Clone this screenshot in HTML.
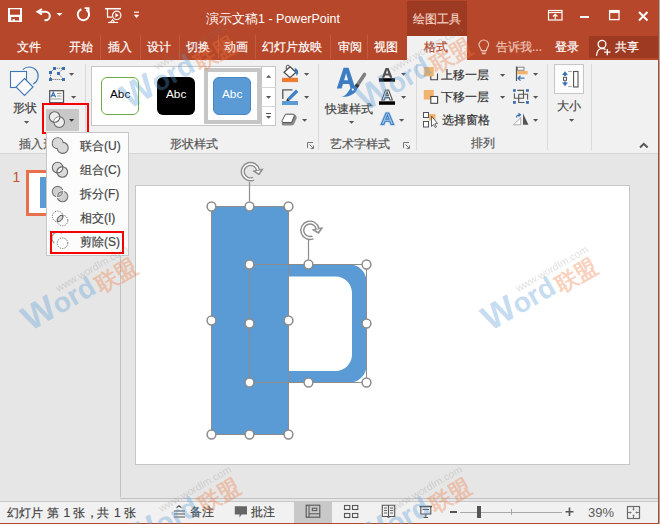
<!DOCTYPE html>
<html><head><meta charset="utf-8">
<style>
*{margin:0;padding:0;box-sizing:border-box}
html,body{width:660px;height:524px;overflow:hidden}
body{position:relative;background:#E6E6E6;font-family:"Liberation Sans",sans-serif;font-size:12px;color:#444}
.a{position:absolute}
.t{position:absolute;white-space:nowrap;line-height:12px;font-size:12px;-webkit-text-stroke:0.2px currentColor}
.ns{-webkit-text-stroke:0!important}
svg{position:absolute;overflow:visible}
.wm{position:absolute;width:0;height:0;transform-origin:0 0;transform:rotate(-30deg);pointer-events:none}
.wm span{position:absolute;white-space:nowrap;font-family:"Liberation Sans",sans-serif;font-weight:bold;line-height:1}
.w1{left:43px;top:-29px;font-size:10.5px;font-weight:normal!important;color:rgba(120,120,120,0.25)}
.wm .wW{position:static;font-size:35px}
.w2{left:-1px;top:-29.6px;font-size:28px;color:rgba(91,155,213,0.36)}
.w3{left:80px;top:-16px;font-size:22px;color:rgba(240,120,60,0.36)}
</style></head><body>

<!-- title bar + tabs -->
<div class="a" style="left:0;top:0;width:660px;height:60px;background:#B7472A"></div>
<div class="a" style="left:407px;top:1px;width:60px;height:35px;background:#9E3A21"></div>
<div class="a" style="left:407px;top:36px;width:60px;height:24px;background:#F1F1F1"></div>
<div class="a" style="left:589px;top:36px;width:69px;height:22px;background:#9E3A21"></div>

<div class="t ns" style="left:206px;top:13px;color:#fff;font-size:12.5px">演示文稿1 - PowerPoint</div>
<div class="t" style="left:413px;top:13px;color:#F3D0C4">绘图工具</div>


<!-- title icons -->
<svg style="left:8px;top:8px" width="14" height="14"><path fill="#fff" fill-rule="evenodd" d="M0 0H14V14H0Z M2 1.2V6.7H12V1.2Z M3.2 9V12.6H4.7V10.9H6.8V12.6H11V9Z"/></svg>
<svg style="left:36px;top:8px" width="16" height="14"><path d="M6 1 L1.5 3.7 L6 6.5" fill="none" stroke="#fff" stroke-width="2" stroke-linejoin="miter"/><path d="M2 3.7 H9.5 A4.3 4.3 0 0 1 9.5 12.3 H8.5" fill="none" stroke="#fff" stroke-width="2"/></svg>
<svg style="left:56px;top:13px" width="7" height="4"><path d="M0.5 0H6.5L3.5 3Z" fill="#fff"/></svg>
<svg style="left:76px;top:7px" width="16" height="16"><path d="M10.3 2.6 A5.7 5.7 0 1 1 5.4 2.2" fill="none" stroke="#fff" stroke-width="2"/><path d="M8.6 1.2 H12.6 V5.2" fill="none" stroke="#fff" stroke-width="1.8"/></svg>
<svg style="left:104px;top:7px" width="20" height="17"><path d="M1 1.7H17" stroke="#fff" stroke-width="1.5"/><path d="M3.5 2V10.2H8.3" fill="none" stroke="#fff" stroke-width="1.2"/><circle cx="12.7" cy="8.3" r="4.2" fill="none" stroke="#fff" stroke-width="1.2"/><path d="M11.4 6.1V10.5L14.8 8.3Z" fill="#fff"/><path d="M4 15.5H14" stroke="#fff" stroke-width="1.1"/><path d="M6.5 15.3 L8.6 12.8 L10.7 15.3" fill="none" stroke="#fff" stroke-width="1.1"/></svg>
<svg style="left:133px;top:11px" width="7" height="8"><path d="M1 1.2H6" stroke="#fff" stroke-width="1.2"/><path d="M0.8 3.8H6.3L3.55 7Z" fill="#fff"/></svg>

<!-- window controls -->
<svg style="left:548px;top:10px" width="15" height="11"><rect x="0.5" y="0.5" width="13.5" height="9.5" fill="none" stroke="#fff" stroke-width="1.2"/><path d="M0.5 2.5H14" stroke="#fff" stroke-width="1.2"/><path d="M7.2 9.5V4.5 M5 6.5L7.2 4.3L9.4 6.5" fill="none" stroke="#fff" stroke-width="1.2"/></svg>
<div class="a" style="left:580px;top:16px;width:9px;height:2px;background:#fff"></div>
<svg style="left:609px;top:10px" width="11" height="11"><rect x="0.6" y="0.6" width="9.4" height="9" fill="none" stroke="#fff" stroke-width="1.3"/><path d="M0.5 2H10.5" stroke="#fff" stroke-width="2.2"/></svg>
<svg style="left:638px;top:10.5px" width="11" height="11"><path d="M1 1L9.5 9.5M9.5 1L1 9.5" stroke="#fff" stroke-width="2"/></svg>

<!-- tab separators -->
<div class="a" style="left:100px;top:35px;width:1px;height:24px;background:#C15B40"></div>
<div class="a" style="left:140px;top:35px;width:1px;height:24px;background:#C15B40"></div>
<div class="a" style="left:179px;top:35px;width:1px;height:24px;background:#C15B40"></div>
<div class="a" style="left:218px;top:35px;width:1px;height:24px;background:#C15B40"></div>
<div class="a" style="left:255px;top:35px;width:1px;height:24px;background:#C15B40"></div>
<div class="a" style="left:330px;top:35px;width:1px;height:24px;background:#C15B40"></div>
<div class="a" style="left:367px;top:35px;width:1px;height:24px;background:#C15B40"></div>

<!-- bulb -->
<svg style="left:478px;top:40px" width="12" height="15"><path d="M3.2 10.5 C3.2 8 1 7 1 4.8 A4.8 4.8 0 0 1 10.6 4.8 C10.6 7 8.4 8 8.4 10.5 Z" fill="none" stroke="#EDC3B5" stroke-width="1.2"/><path d="M3.5 12H8.2 M4 13.6H7.7" stroke="#EDC3B5" stroke-width="1.2"/></svg>
<!-- person -->
<svg style="left:595px;top:39px" width="17" height="18"><circle cx="7" cy="5.3" r="3.9" fill="none" stroke="#fff" stroke-width="1.3"/><path d="M1.5 16.8 C1.8 12.5 4 9.5 7 9.3 C8.5 9.3 9.5 9.8 10.5 10.6" fill="none" stroke="#fff" stroke-width="1.3"/><path d="M12.3 10V16.3 M9.2 13.2H15.5" stroke="#fff" stroke-width="1.3"/></svg>

<!-- tabs -->
<div class="t" style="left:17px;top:41px;color:#fff">文件</div>
<div class="t" style="left:69px;top:41px;color:#fff">开始</div>
<div class="t" style="left:108px;top:41px;color:#fff">插入</div>
<div class="t" style="left:147px;top:41px;color:#fff">设计</div>
<div class="t" style="left:186px;top:41px;color:#fff">切换</div>
<div class="t" style="left:224px;top:41px;color:#fff">动画</div>
<div class="t" style="left:262px;top:41px;color:#fff">幻灯片放映</div>
<div class="t" style="left:338px;top:41px;color:#fff">审阅</div>
<div class="t" style="left:374px;top:41px;color:#fff">视图</div>
<div class="t" style="left:424px;top:41px;color:#B7472A">格式</div>
<div class="t" style="left:496px;top:41px;color:#EDC3B5">告诉我...</div>
<div class="t" style="left:555px;top:41px;color:#fff">登录</div>
<div class="t" style="left:615px;top:41px;color:#fff">共享</div>

<!-- ribbon -->
<div class="a" style="left:0;top:60px;width:658px;height:94px;background:#F1F1F1;border-bottom:1px solid #D6D6D6"></div>


<!-- ===== ribbon content ===== -->
<!-- group separators -->
<div class="a" style="left:85px;top:64px;width:1px;height:86px;background:#DADADA"></div>
<div class="a" style="left:318px;top:64px;width:1px;height:86px;background:#DADADA"></div>
<div class="a" style="left:416px;top:64px;width:1px;height:86px;background:#DADADA"></div>
<div class="a" style="left:547px;top:64px;width:1px;height:86px;background:#DADADA"></div>
<div class="a" style="left:591px;top:64px;width:1px;height:86px;background:#DADADA"></div>

<!-- shapes icon -->
<svg style="left:9px;top:66px" width="32" height="32"><path d="M13.8 3.6 A9 9 0 1 1 24.2 18" fill="none" stroke="#3F78B8" stroke-width="1.1"/><rect x="1.5" y="5.5" width="16" height="16" fill="#FAFAFA" stroke="#3F78B8" stroke-width="1.1"/><path d="M15.5 12.5L24 21L15.5 29.5L7 21Z" fill="#FCFCFC" stroke="#3F78B8" stroke-width="1.1"/></svg>
<div class="t" style="left:13px;top:102px;color:#444">形状</div>
<svg style="left:24px;top:121px" width="6" height="4"><path d="M0 0H5.2L2.6 2.8Z" fill="#555"/></svg>

<!-- edit shape icon -->
<svg style="left:48px;top:66px" width="18" height="16"><path d="M6.4 2.3H15.5 M2.5 6.5L6.4 2.3 M15.5 2.3L10.4 7.3L15.5 13.5 M2.5 6.5V13.5H15.5" fill="none" stroke="#777" stroke-width="1" stroke-dasharray="1.3 0.9"/><g fill="#3A6FB0"><rect x="5" y="1" width="3" height="3"/><rect x="14" y="1" width="3" height="3"/><rect x="1" y="5" width="3" height="3"/><rect x="9" y="6" width="3" height="3"/><rect x="1" y="12" width="3" height="3"/><rect x="14" y="12" width="3" height="3"/></g></svg>
<svg style="left:69px;top:73px" width="6" height="4"><path d="M0 0H5.2L2.6 2.8Z" fill="#555"/></svg>
<!-- text box icon -->
<svg style="left:49px;top:90px" width="16" height="14"><rect x="0.7" y="0.7" width="13.8" height="12" fill="#fff" stroke="#555" stroke-width="1.3"/><path d="M2 7.2L4.3 2.2L6.6 7.2 M2.8 5.6H5.8" fill="none" stroke="#3C75B5" stroke-width="1.3"/><path d="M8 3.5H12.5 M8 6H12.5 M2 9H12.5" stroke="#999" stroke-width="1"/></svg>
<svg style="left:71px;top:96px" width="6" height="4"><path d="M0 0H5.2L2.6 2.8Z" fill="#555"/></svg>

<!-- merge shapes (highlighted) -->
<div class="a" style="left:46px;top:109px;width:33px;height:22px;background:#C8C8C8"></div>
<svg style="left:48px;top:110px" width="18" height="19"><defs><clipPath id="mc"><circle cx="11.2" cy="12.2" r="5.3"/></clipPath></defs><circle cx="6.6" cy="7" r="5.3" fill="#EDEDED" stroke="#666" stroke-width="1.1"/><circle cx="11.2" cy="12.2" r="5.3" fill="#EDEDED" stroke="#666" stroke-width="1.1"/><circle cx="6.6" cy="7" r="5.3" fill="#fff" stroke="#666" stroke-width="1.1" clip-path="url(#mc)"/></svg>
<svg style="left:69px;top:119px" width="6" height="4"><path d="M0 0H5.2L2.6 2.8Z" fill="#333"/></svg>
<!-- red highlight box -->
<div class="a" style="left:42px;top:103px;width:47px;height:31px;border:2px solid #F80000"></div>
<div class="t" style="left:19px;top:138px;color:#555">插入形状</div>

<!-- gallery -->
<div class="a" style="left:91px;top:66px;width:185px;height:60px;background:#fff;border:1px solid #C6C6C6"></div>
<div class="a" style="left:101px;top:77px;width:38px;height:38px;border:1px solid #70AD47;border-radius:6px;background:#fff"></div>
<div class="t ns" style="left:110px;top:87.5px;color:#000;font-size:11.8px">Abc</div>
<div class="a" style="left:157px;top:77px;width:38px;height:38px;border-radius:6px;background:#000"></div>
<div class="t ns" style="left:166px;top:87.5px;color:#fff;font-size:11.8px">Abc</div>
<div class="a" style="left:204px;top:68px;width:57px;height:56px;border:4px solid #C6C6C6;background:#fff"></div>
<div class="a" style="left:213px;top:77px;width:38px;height:38px;border-radius:6px;background:#5B9BD5;border:1px solid #4A86C0"></div>
<div class="t ns" style="left:222px;top:87.5px;color:#fff;font-size:11.8px">Abc</div>
<!-- scroll column -->
<div class="a" style="left:261px;top:66px;width:15px;height:60px;border:1px solid #C6C6C6;background:#fff"></div>
<div class="a" style="left:261px;top:87px;width:15px;height:1px;background:#D6D6D6"></div>
<div class="a" style="left:261px;top:106px;width:15px;height:1px;background:#D6D6D6"></div>
<svg style="left:266px;top:75px" width="6" height="4"><path d="M0 2.8H5.2L2.6 0Z" fill="#555"/></svg>
<svg style="left:266px;top:96px" width="6" height="4"><path d="M0 0H5.2L2.6 2.8Z" fill="#555"/></svg>
<div class="a" style="left:266px;top:113px;width:5px;height:1px;background:#555"></div>
<svg style="left:266px;top:116px" width="6" height="4"><path d="M0 0H5.2L2.6 2.8Z" fill="#555"/></svg>

<!-- fill / outline / effects -->
<svg style="left:281px;top:65px" width="19" height="18"><path d="M5.3 4.5 V1.8 A1.6 1.6 0 0 1 8.5 1.8 V5" fill="none" stroke="#555" stroke-width="1"/><path d="M9 1.8 L15 7.3 L9 12.8 L3 7.3 Z" fill="#fff" stroke="#444" stroke-width="1.2"/><path d="M13.5 3.2 C15.8 3.3 17.2 5 17.2 7.2 C17.2 9 16.2 10.5 15.3 10.8 C15.6 9.2 15.2 8 14.2 7 Z" fill="#3C75B5"/><rect x="1" y="12.8" width="16" height="4.3" fill="#ED7D31"/></svg>
<svg style="left:304px;top:73px" width="6" height="4"><path d="M0 0H5.2L2.6 2.8Z" fill="#555"/></svg>
<svg style="left:281px;top:88px" width="19" height="18"><path d="M1.8 11V1.8H11.5" fill="none" stroke="#555" stroke-width="1.3"/><path d="M15 1.6 L17.3 3.9 L8.6 12.6 L6.3 10.3 Z" fill="#3F7FC8"/><path d="M6.3 10.3 L8.6 12.6 L5 13.8 Z" fill="#333"/><rect x="1" y="13" width="16" height="4" fill="#5B9BD5"/></svg>
<svg style="left:304px;top:96px" width="6" height="4"><path d="M0 0H5.2L2.6 2.8Z" fill="#555"/></svg>
<svg style="left:280px;top:113px" width="19" height="14"><path d="M6 1 H13.5 Q16.5 1.5 16.8 5 L14 11.2 Q13 12.5 11 12.5 H3 Q1.6 12.3 1.8 10.5 Z" fill="#8A8A8A"/><path d="M5.5 1.2 H13.5 Q14.8 1.6 14 3.5 L11.5 9.5 H3 Q1.5 9.3 2.2 7.5 Z" fill="#fff" stroke="#555" stroke-width="1"/></svg>
<svg style="left:302px;top:119px" width="6" height="4"><path d="M0 0H5.2L2.6 2.8Z" fill="#555"/></svg>
<div class="t" style="left:170px;top:138px;color:#555">形状样式</div>
<svg style="left:307px;top:142px" width="8" height="8"><path d="M0.5 6V0.5H6" fill="none" stroke="#777" stroke-width="1"/><path d="M2.5 2.5L6.5 6.5 M3.5 6.5H6.5V3.5" fill="none" stroke="#777" stroke-width="1"/></svg>

<!-- wordart group -->
<svg style="left:335px;top:66px" width="32" height="33"><path d="M1.8 22.6 L8.6 1.8 H13.6 L20.4 22.6 H15.6 L14.2 18 H8 L6.6 22.6 Z M9.1 14.3 H13.1 L11.1 7.2 Z" fill="#3C7DC4" fill-rule="evenodd"/><path d="M29.5 8.5 L22.5 19" stroke="#808080" stroke-width="3.6" stroke-linecap="round"/><path d="M22.8 18.5 L20.8 21.5" stroke="#3A3A3A" stroke-width="4"/><path d="M19.6 19.8 C16.5 20.5 15 23 13 26 C11 29 8.5 30.6 6.5 31 C10.5 31.2 15.5 30 18.8 27.5 C21.5 25.5 22.5 23.5 22.3 21.5 Z" fill="#3C7DC4"/><circle cx="17.8" cy="23.6" r="1.1" fill="#fff"/></svg>
<div class="t" style="left:325px;top:103px;color:#444">快速样式</div>
<svg style="left:349px;top:121px" width="6" height="4"><path d="M0 0H5.2L2.6 2.8Z" fill="#555"/></svg>
<svg style="left:379px;top:67px" width="17" height="16"><path d="M2.8 10.8L6.6 1H9.6L13.4 10.8H10.9L10.1 8.5H6.1L5.3 10.8Z M6.8 6.6H9.4L8.1 2.9Z" fill="#505050" fill-rule="evenodd"/><rect x="0" y="11.2" width="16" height="3.5" fill="#000"/></svg>
<svg style="left:401px;top:73px" width="6" height="4"><path d="M0 0H5.2L2.6 2.8Z" fill="#555"/></svg>
<svg style="left:379px;top:89px" width="17" height="17"><path d="M2.8 11L6.6 1H9.6L13.4 11H10.9L10.1 8.6H6.1L5.3 11Z M6.8 6.6H9.4L8.1 2.9Z" fill="#F4F4F4" stroke="#555" stroke-width="1.1" fill-rule="evenodd"/><rect x="0" y="12.3" width="16" height="3.5" fill="#000"/></svg>
<svg style="left:401px;top:96px" width="6" height="4"><path d="M0 0H5.2L2.6 2.8Z" fill="#555"/></svg>
<svg style="left:379px;top:112px" width="17" height="15"><path d="M2.2 12.5L7 1H9.8L14.6 12.5H12L10.8 9.3H6L4.8 12.5Z M6.8 7.1H10L8.4 3Z" fill="none" stroke="#BFD6EE" stroke-width="2.6" fill-rule="evenodd"/><path d="M2.2 12.5L7 1H9.8L14.6 12.5H12L10.8 9.3H6L4.8 12.5Z M6.8 7.1H10L8.4 3Z" fill="#A9CBEC" stroke="#3C7DC4" stroke-width="1.1" fill-rule="evenodd"/></svg>
<svg style="left:399px;top:119px" width="6" height="4"><path d="M0 0H5.2L2.6 2.8Z" fill="#555"/></svg>
<div class="t" style="left:330px;top:138px;color:#555">艺术字样式</div>
<svg style="left:403px;top:142px" width="8" height="8"><path d="M0.5 6V0.5H6" fill="none" stroke="#777" stroke-width="1"/><path d="M2.5 2.5L6.5 6.5 M3.5 6.5H6.5V3.5" fill="none" stroke="#777" stroke-width="1"/></svg>

<!-- arrange group -->
<svg style="left:423px;top:66px" width="17" height="16"><path d="M7.8 7.5V13.8H14.5V7.5" fill="none" stroke="#444" stroke-width="1.1"/><rect x="0.8" y="1" width="10" height="9.3" fill="#F2B46C"/></svg>
<div class="t" style="left:441px;top:69px;color:#333">上移一层</div>
<svg style="left:500px;top:74px" width="6" height="4"><path d="M0 0H5.2L2.6 2.8Z" fill="#555"/></svg>
<svg style="left:423px;top:89px" width="17" height="16"><rect x="0.8" y="1" width="10" height="9.5" fill="#F2B46C"/><rect x="7.8" y="7.5" width="6.8" height="6.8" fill="#fff" stroke="#444" stroke-width="1.1"/></svg>
<div class="t" style="left:441px;top:91px;color:#333">下移一层</div>
<svg style="left:500px;top:96px" width="6" height="4"><path d="M0 0H5.2L2.6 2.8Z" fill="#555"/></svg>
<svg style="left:422px;top:111px" width="18" height="18"><rect x="1.5" y="1.5" width="5" height="5" fill="#fff" stroke="#555" stroke-width="1"/><rect x="1.5" y="10.5" width="5" height="5.5" fill="#fff" stroke="#555" stroke-width="1"/><rect x="7" y="3" width="6.5" height="6.5" fill="#F2B46C"/><path d="M9.5 5 V15.5 L11.5 13.5 L13.3 16.5 L14.5 15.8 L12.8 12.8 L15.5 12.5 Z" fill="#fff" stroke="#555" stroke-width="0.9"/></svg>
<div class="t" style="left:442px;top:114px;color:#333">选择窗格</div>

<svg style="left:515px;top:66px" width="14" height="16"><path d="M1.5 0.5V15" stroke="#555" stroke-width="1.2"/><rect x="2.5" y="1.2" width="6.5" height="3" fill="#fff" stroke="#777" stroke-width="0.9"/><rect x="2.2" y="5" width="10.5" height="3.3" fill="#F2B46C"/><path d="M3 12.2H9.5 M5.5 9.8L3 12.2L5.5 14.6" fill="none" stroke="#3C75B5" stroke-width="1.3"/></svg>
<svg style="left:533px;top:73px" width="6" height="4"><path d="M0 0H5.2L2.6 2.8Z" fill="#555"/></svg>
<svg style="left:512px;top:88px" width="18" height="17"><path d="M5.3 2.4 H11.5 V10.2 H2.4 V5.3 M6.7 6.3 H15.6 V11.5 M6.7 6.3 V14.5 H12.5" fill="none" stroke="#555" stroke-width="1.1"/><g fill="#3A6FB0"><rect x="1" y="1.2" width="2.8" height="2.6"/><rect x="14" y="1.2" width="2.9" height="2.6"/><rect x="1" y="13" width="2.8" height="2.8"/><rect x="14" y="13" width="2.9" height="2.8"/></g></svg>
<svg style="left:533px;top:96px" width="6" height="4"><path d="M0 0H5.2L2.6 2.8Z" fill="#555"/></svg>
<svg style="left:512px;top:112px" width="18" height="14"><path d="M1.5 12.8L8.8 5.5V12.8Z" fill="#fff" stroke="#AAA" stroke-width="1"/><path d="M11 1.5L16.5 12.8H11Z" fill="#555"/><path d="M4.5 5.5C4.5 3.5 5.5 2.8 8 2.8 M6.5 1.2L8.5 2.8L6.5 4.5" fill="none" stroke="#3C75B5" stroke-width="1.2"/></svg>
<svg style="left:533px;top:119px" width="6" height="4"><path d="M0 0H5.2L2.6 2.8Z" fill="#555"/></svg>
<div class="t" style="left:471px;top:137px;color:#555">排列</div>

<!-- size group -->
<div class="a" style="left:554px;top:64px;width:30px;height:30px;border:1px solid #C6C6C6;background:#FCFCFC"></div>
<svg style="left:561px;top:70px" width="19" height="18"><path d="M1 5L4 1.2L7 5Z M1 12.5L4 16.3L7 12.5Z" fill="#3C75B5"/><path d="M4 4V6 M4 11.5V13" stroke="#3C75B5" stroke-width="2"/><rect x="2.5" y="7.3" width="3" height="3" fill="#fff" stroke="#555" stroke-width="1"/><path d="M7.5 1.5H11.5 M7.5 16.5H11.5" stroke="#666" stroke-width="1" stroke-dasharray="1 1"/><rect x="12.6" y="1.5" width="4.4" height="15.5" fill="#fff" stroke="#555" stroke-width="1.1"/></svg>
<div class="t" style="left:557px;top:100px;color:#444">大小</div>
<svg style="left:569px;top:119px" width="6" height="4"><path d="M0 0H5.2L2.6 2.8Z" fill="#555"/></svg>
<svg style="left:639px;top:141px" width="10" height="8"><path d="M1 6.5L4.8 2.8L8.6 6.5" fill="none" stroke="#555" stroke-width="2"/></svg>


<!-- right window border -->
<div class="a" style="left:658px;top:0;width:1px;height:524px;background:#B7472A"></div>
<div class="a" style="left:659px;top:0;width:1px;height:524px;background:#A8A8A8"></div>

<!-- thumbnail pane divider -->
<div class="a" style="left:120px;top:154px;width:1px;height:345px;background:#C2C2C2"></div>
<!-- slide -->
<div class="a" style="left:135px;top:185px;width:495px;height:280px;background:#fff;border:1px solid #C6C6C6"></div>

<!-- status bar -->
<div class="a" style="left:0;top:497px;width:658px;height:26px;background:#F1F1F1"></div>
<div class="a" style="left:0;top:497px;width:658px;height:4px;background:#E6E6E6"></div>
<div class="a" style="left:120px;top:498px;width:538px;height:1px;background:#C2C2C2"></div>
<div class="a" style="left:0;top:501px;width:658px;height:1px;background:#C8C8C8"></div>
<div class="a" style="left:0;top:523px;width:659px;height:1px;background:#B7472A"></div>


<!-- slide content -->
<svg style="left:0;top:0" width="660" height="524">
<rect x="211.5" y="206.5" width="77" height="228" fill="#5B9BD5"/>
<path d="M250 264.5 H349.5 A17 17 0 0 1 366.5 281.5 V365.5 A17 17 0 0 1 349.5 382.5 H250 Z M288.5 276.5 V371 H335.5 A16.5 16.5 0 0 0 352 354.5 V293 A16.5 16.5 0 0 0 335.5 276.5 Z" fill="#5B9BD5" fill-rule="evenodd"/>
<rect x="211.5" y="206.5" width="77" height="228" fill="none" stroke="#8C8C8C" stroke-width="1"/>
<rect x="249.5" y="264.5" width="117" height="118" fill="none" stroke="#8C8C8C" stroke-width="1"/>
<path d="M249.5 182 V201" stroke="#8C8C8C" stroke-width="1.2"/>
<path d="M308.5 240 V259.5" stroke="#8C8C8C" stroke-width="1.2"/>
<g transform="translate(250.5,171.6)"><path d="M2.88 7.14 A7.7 7.7 0 1 1 7.53 -1.60" fill="none" stroke="#8C8C8C" stroke-width="4.3"/><path d="M12.62 -2.68 L8.57 3.29 L2.45 -0.52Z" fill="#8C8C8C" stroke="#8C8C8C" stroke-width="0.8" stroke-linejoin="round"/><path d="M2.88 7.14 A7.7 7.7 0 1 1 7.53 -1.60" fill="none" stroke="#fff" stroke-width="1.5"/><path d="M10.26 -1.26 L8.20 1.53 L5.18 -0.18Z" fill="#fff"/></g>
<g transform="translate(310,230.3)"><path d="M2.88 7.14 A7.7 7.7 0 1 1 7.53 -1.60" fill="none" stroke="#8C8C8C" stroke-width="4.3"/><path d="M12.62 -2.68 L8.57 3.29 L2.45 -0.52Z" fill="#8C8C8C" stroke="#8C8C8C" stroke-width="0.8" stroke-linejoin="round"/><path d="M2.88 7.14 A7.7 7.7 0 1 1 7.53 -1.60" fill="none" stroke="#fff" stroke-width="1.5"/><path d="M10.26 -1.26 L8.20 1.53 L5.18 -0.18Z" fill="#fff"/></g>
<circle cx="211.5" cy="206.5" r="4.4" fill="#fff" stroke="#8C8C8C" stroke-width="1.5"/><circle cx="249.5" cy="206.5" r="4.4" fill="#fff" stroke="#8C8C8C" stroke-width="1.5"/><circle cx="288.5" cy="206.5" r="4.4" fill="#fff" stroke="#8C8C8C" stroke-width="1.5"/>
<circle cx="211.5" cy="320.5" r="4.4" fill="#fff" stroke="#8C8C8C" stroke-width="1.5"/><circle cx="288.5" cy="320.5" r="4.4" fill="#fff" stroke="#8C8C8C" stroke-width="1.5"/>
<circle cx="211.5" cy="434.5" r="4.4" fill="#fff" stroke="#8C8C8C" stroke-width="1.5"/><circle cx="249.5" cy="434.5" r="4.4" fill="#fff" stroke="#8C8C8C" stroke-width="1.5"/><circle cx="288.5" cy="434.5" r="4.4" fill="#fff" stroke="#8C8C8C" stroke-width="1.5"/>
<circle cx="249.5" cy="264.5" r="4.4" fill="#fff" stroke="#8C8C8C" stroke-width="1.5"/><circle cx="308.5" cy="264.5" r="4.4" fill="#fff" stroke="#8C8C8C" stroke-width="1.5"/><circle cx="366.5" cy="264.5" r="4.4" fill="#fff" stroke="#8C8C8C" stroke-width="1.5"/>
<circle cx="249.5" cy="323.5" r="4.4" fill="#fff" stroke="#8C8C8C" stroke-width="1.5"/><circle cx="366.5" cy="323.5" r="4.4" fill="#fff" stroke="#8C8C8C" stroke-width="1.5"/>
<circle cx="249.5" cy="382.5" r="4.4" fill="#fff" stroke="#8C8C8C" stroke-width="1.5"/><circle cx="308.5" cy="382.5" r="4.4" fill="#fff" stroke="#8C8C8C" stroke-width="1.5"/><circle cx="366.5" cy="382.5" r="4.4" fill="#fff" stroke="#8C8C8C" stroke-width="1.5"/>
</svg>

<!-- thumbnail -->
<div class="t ns" style="left:12.5px;top:170px;color:#C5532F;font-size:14px;line-height:14px">1</div>
<div class="a" style="left:26px;top:170px;width:100px;height:46px;border:3px solid #E8704C;background:#fff"></div>
<div class="a" style="left:40px;top:177px;width:8px;height:31px;background:#5B9BD5"></div>

<!-- status bar content -->
<div class="t" style="left:7px;top:507px;color:#444">幻灯片</div>
<div class="t" style="left:46.5px;top:507px;color:#444">第</div>
<div class="t" style="left:63.5px;top:507px;color:#444">1</div>
<div class="t" style="left:73px;top:507px;color:#444">张</div>
<div class="t" style="left:86px;top:507px;color:#444">，</div>
<div class="t" style="left:97px;top:507px;color:#444">共</div>
<div class="t" style="left:114px;top:507px;color:#444">1</div>
<div class="t" style="left:123.5px;top:507px;color:#444">张</div>
<svg style="left:173px;top:505px" width="13" height="13"><path d="M3.5 2.8L6 0.8L8.5 2.8" fill="none" stroke="#555" stroke-width="1.1"/><path d="M1 6H12 M1 9H12 M1 12H12" stroke="#555" stroke-width="1.1"/></svg>
<div class="t" style="left:190px;top:506px;color:#444">备注</div>
<svg style="left:234px;top:505px" width="14" height="14"><path d="M0.8 1.2H13V9.5H7.5L5.5 12.8V9.5H0.8Z" fill="#666"/></svg>
<div class="t" style="left:251px;top:506px;color:#444">批注</div>
<div class="a" style="left:294px;top:502px;width:38px;height:21px;background:#C8C8C8"></div>
<svg style="left:305px;top:504px" width="17" height="15"><rect x="1.2" y="1.2" width="13.6" height="12" fill="none" stroke="#555" stroke-width="1.1"/><path d="M4 1.2V13.2 M4 9.8H14.8" stroke="#555" stroke-width="1"/><rect x="7.3" y="4.2" width="4.5" height="2.4" fill="none" stroke="#555" stroke-width="1"/></svg>
<svg style="left:343px;top:504px" width="16" height="15"><g fill="none" stroke="#555" stroke-width="1.1"><rect x="1.5" y="1.5" width="5.3" height="4"/><rect x="9.5" y="1.5" width="5.3" height="4"/><rect x="1.5" y="9.5" width="5.3" height="4"/><rect x="9.5" y="9.5" width="5.3" height="4"/></g></svg>
<svg style="left:381px;top:504px" width="16" height="15"><path d="M1.3 1.3H7.5V12.5H1.3Z M7.5 1.3H13.7V12.5H7.5Z" fill="none" stroke="#555" stroke-width="1.1"/><path d="M3 4H6 M3 6.5H6 M3 9H6 M9 4H12 M9 6.5H12 M9 9H12" stroke="#555" stroke-width="0.9"/><path d="M6 12.5L7.5 14L9 12.5" fill="none" stroke="#555" stroke-width="1"/></svg>
<svg style="left:419px;top:504px" width="14" height="15"><path d="M0.5 2.5H13" stroke="#555" stroke-width="1.5"/><path d="M1.8 2.5V10H11.8V2.5" fill="none" stroke="#555" stroke-width="1.1"/><path d="M3.5 5.5H10" stroke="#555" stroke-width="1"/><path d="M6.8 10V13.5 M4.5 13.5H9" stroke="#555" stroke-width="1.1"/></svg>
<div class="a" style="left:450px;top:511px;width:7px;height:2px;background:#555"></div>
<div class="a" style="left:460px;top:512px;width:102px;height:1px;background:#A8A8A8"></div>
<div class="a" style="left:511px;top:509px;width:1px;height:6px;background:#A8A8A8"></div>
<div class="a" style="left:477px;top:506px;width:4px;height:12px;background:#555"></div>
<svg style="left:565px;top:507px" width="9" height="10"><path d="M4.5 0.5V9 M0.5 4.8H8.5" stroke="#555" stroke-width="1.6"/></svg>
<div class="t ns" style="left:588px;top:507px;color:#5A5A5A;font-size:13px">39%</div>
<svg style="left:626px;top:505px" width="15" height="15"><rect x="1.5" y="1.5" width="12" height="12" fill="none" stroke="#6A6A6A" stroke-width="1.2"/><path d="M7.5 2V5.5 M7.5 9.5V13 M2 7.5H5.5 M9.5 7.5H13" stroke="#777" stroke-width="1"/><path d="M6 4.5H9L7.5 3Z M6 10.5H9L7.5 12Z M4.5 6V9L3 7.5Z M10.5 6V9L12 7.5Z" fill="#777"/></svg>

<!-- dropdown menu -->
<div class="a" style="left:46px;top:132px;width:83px;height:124px;background:#FCFCFC;border:1px solid #C6C6C6"></div>
<svg style="left:46px;top:133px" width="30" height="125">
<defs>
<clipPath id="c2a"><circle cx="16.3" cy="39" r="5.3"/></clipPath>
<clipPath id="c4a"><circle cx="16.5" cy="87.5" r="5.3"/></clipPath>
</defs>
<!-- union -->
<circle cx="11.7" cy="10.2" r="5.5" fill="#D9D9D9" stroke="#666" stroke-width="1.1"/>
<circle cx="16.7" cy="14.9" r="5.5" fill="#D9D9D9" stroke="#666" stroke-width="1.1"/>
<circle cx="11.7" cy="10.2" r="4.95" fill="#D9D9D9"/>
<!-- combine -->
<circle cx="11.6" cy="34.6" r="5.3" fill="#DCDCDC" stroke="#666" stroke-width="1.1"/>
<circle cx="16.3" cy="39" r="5.3" fill="#DCDCDC" stroke="#666" stroke-width="1.1"/>
<path d="M11.07 39.87 A5.3 5.3 0 0 1 16.83 33.73 A5.3 5.3 0 0 1 11.07 39.87Z" fill="#FCFCFC" stroke="#666" stroke-width="1.1"/>
<!-- fragment -->
<circle cx="11.6" cy="58.7" r="5.3" fill="#CFCFCF" stroke="#777" stroke-width="1.1"/>
<circle cx="16.5" cy="63.5" r="5.3" fill="#CFCFCF" stroke="#777" stroke-width="1.1"/>
<path d="M11.22 63.99 A5.3 5.3 0 0 1 16.88 58.21 A5.3 5.3 0 0 1 11.22 63.99Z" fill="none" stroke="#FCFCFC" stroke-width="1.8"/>
<g transform="translate(14.05 61.1) scale(0.84) translate(-14.05 -61.1)"><path d="M11.22 63.99 A5.3 5.3 0 0 1 16.88 58.21 A5.3 5.3 0 0 1 11.22 63.99Z" fill="#CFCFCF" stroke="#777" stroke-width="1.3"/></g>
<!-- intersect -->
<circle cx="11.6" cy="83.4" r="5.3" fill="none" stroke="#666" stroke-width="1" stroke-dasharray="1.2 1.2"/>
<circle cx="16.5" cy="87.5" r="5.3" fill="none" stroke="#666" stroke-width="1" stroke-dasharray="1.2 1.2"/>
<path d="M11.34 88.69 A5.3 5.3 0 0 1 16.76 82.21 A5.3 5.3 0 0 1 11.34 88.69Z" fill="#D4D4D4" stroke="#555" stroke-width="1"/>
<!-- subtract -->
<path d="M8.2 110 A5.3 5.3 0 0 1 15.8 100.3" fill="none" stroke="#8A8A8A" stroke-width="1.1"/>
<circle cx="16.5" cy="110.2" r="5.3" fill="none" stroke="#666" stroke-width="1" stroke-dasharray="1.2 1.2"/>
</svg>
<div class="t" style="left:80px;top:140px;color:#444">联合(U)</div>
<div class="t" style="left:80px;top:164px;color:#444">组合(C)</div>
<div class="t" style="left:80px;top:188px;color:#444">拆分(F)</div>
<div class="t" style="left:80px;top:212px;color:#444">相交(I)</div>
<div class="t" style="left:80px;top:236px;color:#444">剪除(S)</div>
<div class="a" style="left:50px;top:231px;width:74px;height:23px;border:2px solid #F80000"></div>


<!-- watermarks -->
<div class="wm" style="left:130px;top:109px"><span class="w1">www.wordlm.com</span><span class="w2"><span class="wW">W</span>ord</span><span class="w3">联盟</span></div>
<div class="wm" style="left:366px;top:111px"><span class="w1">www.wordlm.com</span><span class="w2"><span class="wW">W</span>ord</span><span class="w3">联盟</span></div>
<div class="wm" style="left:31px;top:331px"><span class="w1">www.wordlm.com</span><span class="w2"><span class="wW">W</span>ord</span><span class="w3">联盟</span></div>
<div class="wm" style="left:491px;top:331px"><span class="w1">www.wordlm.com</span><span class="w2"><span class="wW">W</span>ord</span><span class="w3">联盟</span></div>
<div class="wm" style="left:134px;top:551px"><span class="w1">www.wordlm.com</span><span class="w2"><span class="wW">W</span>ord</span><span class="w3">联盟</span></div>
<div class="wm" style="left:365px;top:551px"><span class="w1">www.wordlm.com</span><span class="w2"><span class="wW">W</span>ord</span><span class="w3">联盟</span></div>
</body></html>
